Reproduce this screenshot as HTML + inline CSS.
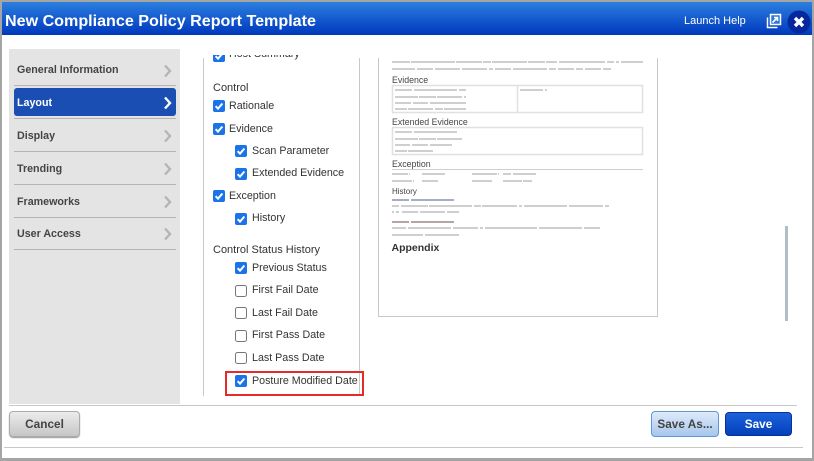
<!DOCTYPE html>
<html><head><meta charset="utf-8">
<style>
html,body{margin:0;padding:0;width:814px;height:461px;overflow:hidden;background:#fff;font-family:"Liberation Sans",Arial,sans-serif}
.a{position:absolute;white-space:nowrap}
#frame{position:absolute;left:0;top:0;width:814px;height:461px;box-sizing:border-box;border-style:solid;border-color:#a5a5a5;border-width:2px 2px 3px 2px;z-index:10;pointer-events:none}
#hd{left:2px;top:2px;width:810px;height:33px;background:linear-gradient(#2c7fde,#0a49c6 75%,#0039bb)}
.nav{left:17px;font-size:10.7px;font-weight:bold;color:#444;line-height:14px}
.div{left:14px;width:162px;height:1px;background:#b4b4b4}
.chev{position:absolute;left:163px;width:9px;height:14px}
.t{font-size:10.7px;color:#333;line-height:14px}
.h{font-size:11px;color:#333;line-height:14px;left:213px}
.cb{position:absolute;width:12px;height:12px}
.btn{position:absolute;box-sizing:border-box;text-align:center;font-size:11.8px;font-weight:bold;border-radius:4px}
</style></head><body>
<svg width="0" height="0" style="position:absolute"><defs>
<symbol id="on" viewBox="0 0 12 12"><rect width="12" height="12" rx="2" fill="#1a73e8"/><path d="M2.6 6.200 5 8.600 9.400 3.500" fill="none" stroke="#fff" stroke-width="2"/></symbol>
<symbol id="off" viewBox="0 0 12 12"><rect x=".5" y=".5" width="11" height="11" rx="2" fill="#fff" stroke="#767676"/></symbol>
<symbol id="ch" viewBox="0 0 9 14"><path d="M2 1.500 7 7 2 12.500" fill="none" stroke="currentColor" stroke-width="2.400"/></symbol>
</defs></svg>

<div id="frame"></div>
<div class="a" id="hd"></div>
<div class="a" style="left:5px;top:11px;font-size:16.1px;font-weight:bold;color:#fff;line-height:20px">New Compliance Policy Report Template</div>
<div class="a" style="left:684px;top:14px;font-size:11px;color:#fff;line-height:14px">Launch Help</div>
<svg class="a" style="left:766px;top:13px" width="16" height="16" viewBox="0 0 16 16"><rect x="4.500" y="1.500" width="10" height="10" fill="#2f78d8" stroke="#fff" stroke-width="1.500"/><path d="M1.500 4.500V14.500H11.500" fill="none" stroke="#fff" stroke-width="1.500"/><path d="M6.500 9.500 11 5M8 4.500h3.500V8" fill="none" stroke="#fff" stroke-width="1.600"/></svg>
<svg class="a" style="left:787px;top:10px" width="24" height="24" viewBox="0 0 24 24"><circle cx="12" cy="12" r="11.500" fill="#07289c"/><path d="M8 8 16 16M16 8 8 16" stroke="#fff" stroke-width="3.400"/></svg>

<div class="a" style="left:9px;top:49px;width:171px;height:355px;background:#e4e4e4"></div>
<div class="a nav" style="top:63px">General Information</div>
<div class="a div" style="top:85px"></div>
<div class="a" style="left:14px;top:88px;width:162px;height:28px;background:#1b4eb2;border-radius:3px"></div>
<div class="a nav" style="top:96px;color:#fff">Layout</div>
<div class="a div" style="top:118px"></div>
<div class="a nav" style="top:129px">Display</div>
<div class="a div" style="top:151px"></div>
<div class="a nav" style="top:162px">Trending</div>
<div class="a div" style="top:184px"></div>
<div class="a nav" style="top:195px">Frameworks</div>
<div class="a div" style="top:217px"></div>
<div class="a nav" style="top:227px">User Access</div>
<div class="a div" style="top:249px"></div>
<svg class="chev" style="top:64px;color:#b5b5b5"><use href="#ch"/></svg>
<svg class="chev" style="top:96px;color:#fff"><use href="#ch"/></svg>
<svg class="chev" style="top:129px;color:#b5b5b5"><use href="#ch"/></svg>
<svg class="chev" style="top:162px;color:#b5b5b5"><use href="#ch"/></svg>
<svg class="chev" style="top:195px;color:#b5b5b5"><use href="#ch"/></svg>
<svg class="chev" style="top:227px;color:#b5b5b5"><use href="#ch"/></svg>

<div class="a" style="left:203px;top:58px;width:1px;height:338px;background:#c8c8c8"></div>
<div class="a" style="left:359px;top:58px;width:1px;height:338px;background:#c8c8c8"></div>

<div class="a" style="left:205px;top:55px;width:150px;height:9px;overflow:hidden">
  <svg class="cb" style="left:8px;top:-5px"><use href="#on"/></svg>
  <div class="a t" style="left:24px;top:-8px">Host Summary</div>
</div>

<div class="a h" style="top:81px">Control</div>
<svg class="cb" style="left:213px;top:100px"><use href="#on"/></svg><div class="a t" style="left:229px;top:99px">Rationale</div>
<svg class="cb" style="left:213px;top:123px"><use href="#on"/></svg><div class="a t" style="left:229px;top:122px">Evidence</div>
<svg class="cb" style="left:235px;top:145px"><use href="#on"/></svg><div class="a t" style="left:252px;top:144px">Scan Parameter</div>
<svg class="cb" style="left:235px;top:168px"><use href="#on"/></svg><div class="a t" style="left:252px;top:166px">Extended Evidence</div>
<svg class="cb" style="left:213px;top:190px"><use href="#on"/></svg><div class="a t" style="left:229px;top:189px">Exception</div>
<svg class="cb" style="left:235px;top:213px"><use href="#on"/></svg><div class="a t" style="left:252px;top:211px">History</div>
<div class="a h" style="top:243px">Control Status History</div>
<svg class="cb" style="left:235px;top:262px"><use href="#on"/></svg><div class="a t" style="left:252px;top:261px">Previous Status</div>
<svg class="cb" style="left:235px;top:285px"><use href="#off"/></svg><div class="a t" style="left:252px;top:283px">First Fail Date</div>
<svg class="cb" style="left:235px;top:307px"><use href="#off"/></svg><div class="a t" style="left:252px;top:306px">Last Fail Date</div>
<svg class="cb" style="left:235px;top:330px"><use href="#off"/></svg><div class="a t" style="left:252px;top:328px">First Pass Date</div>
<svg class="cb" style="left:235px;top:352px"><use href="#off"/></svg><div class="a t" style="left:252px;top:351px">Last Pass Date</div>
<svg class="cb" style="left:235px;top:375px"><use href="#on"/></svg><div class="a t" style="left:252px;top:374px">Posture Modified Date</div>
<div class="a" style="left:225px;top:371px;width:139px;height:25px;box-sizing:border-box;border:2px solid #e62a2a"></div>

<svg class="a" style="left:370px;top:50px" width="300" height="275" viewBox="370 50 300 275">
<path d="M378.500 58V316.500H657.500V58" fill="none" stroke="#c8c8c8"/>
<g fill="#cfcfcf" style="filter:blur(.35px)">
<rect x="392" y="61" width="18" height="2"/><rect x="411" y="61" width="44" height="2"/><rect x="456" y="61" width="26" height="2"/><rect x="483" y="61" width="8" height="2"/><rect x="492" y="61" width="35" height="2"/><rect x="528" y="61" width="17" height="2"/><rect x="546" y="61" width="11" height="2"/><rect x="559" y="61" width="46" height="2"/><rect x="607" y="61" width="7" height="2"/><rect x="616" y="61" width="3" height="2"/><rect x="621" y="61" width="22" height="2"/>
<rect x="392" y="68" width="23" height="2"/><rect x="417" y="68" width="16" height="2"/><rect x="435" y="68" width="25" height="2"/><rect x="462" y="68" width="25" height="2"/><rect x="489" y="68" width="4" height="2"/><rect x="495" y="68" width="16" height="2"/><rect x="513" y="68" width="34" height="2"/><rect x="549" y="68" width="7" height="2"/><rect x="558" y="68" width="16" height="2"/><rect x="576" y="68" width="7" height="2"/><rect x="585" y="68" width="16" height="2"/><rect x="603" y="68" width="8" height="2"/>
<rect x="395" y="89" width="17" height="2"/><rect x="414" y="89" width="43" height="2"/><rect x="459" y="89" width="7" height="2"/><rect x="520" y="89" width="23" height="2"/><rect x="545" y="89" width="2" height="2"/>
<rect x="395" y="96" width="23" height="2"/><rect x="419" y="96" width="17" height="2"/><rect x="437" y="96" width="25" height="2"/><rect x="464" y="96" width="2" height="2"/>
<rect x="395" y="102" width="16" height="2"/><rect x="413" y="102" width="15" height="2"/><rect x="430" y="102" width="36" height="2"/>
<rect x="395" y="108" width="12" height="2"/><rect x="408" y="108" width="25" height="2"/><rect x="435" y="108" width="8" height="2"/><rect x="444" y="108" width="22" height="2"/>
<rect x="395" y="131" width="17" height="2"/><rect x="414" y="131" width="43" height="2"/>
<rect x="395" y="138" width="23" height="2"/><rect x="419" y="138" width="17" height="2"/><rect x="437" y="138" width="25" height="2"/>
<rect x="395" y="144" width="15" height="2"/><rect x="412" y="144" width="16" height="2"/><rect x="430" y="144" width="22" height="2"/>
<rect x="395" y="150" width="12" height="2"/><rect x="408" y="150" width="25" height="2"/>
<rect x="392" y="173" width="16" height="2"/><rect x="409" y="173" width="1" height="2"/><rect x="422" y="173" width="23" height="2"/><rect x="472" y="173" width="25" height="2"/><rect x="498" y="173" width="1" height="2"/><rect x="503" y="173" width="8" height="2"/><rect x="513" y="173" width="23" height="2"/>
<rect x="392" y="180" width="20" height="2"/><rect x="413" y="180" width="1" height="2"/><rect x="422" y="180" width="16" height="2"/><rect x="472" y="180" width="20" height="2"/><rect x="503" y="180" width="19" height="2"/><rect x="523" y="180" width="9" height="2"/>
<rect x="392" y="205" width="7" height="2"/><rect x="401" y="205" width="27" height="2"/><rect x="429" y="205" width="43" height="2"/><rect x="474" y="205" width="7" height="2"/><rect x="482" y="205" width="35" height="2"/><rect x="519" y="205" width="3" height="2"/><rect x="524" y="205" width="43" height="2"/><rect x="569" y="205" width="34" height="2"/><rect x="605" y="205" width="4" height="2"/>
<rect x="392" y="211" width="2" height="2"/><rect x="396" y="211" width="3" height="2"/><rect x="402" y="211" width="16" height="2"/><rect x="420" y="211" width="25" height="2"/><rect x="447" y="211" width="12" height="2"/>
<rect x="392" y="227" width="14" height="2"/><rect x="408" y="227" width="43" height="2"/><rect x="453" y="227" width="25" height="2"/><rect x="480" y="227" width="3" height="2"/><rect x="485" y="227" width="52" height="2"/><rect x="539" y="227" width="43" height="2"/><rect x="584" y="227" width="16" height="2"/>
<rect x="392" y="234" width="31" height="2"/><rect x="425" y="234" width="34" height="2"/>
</g>
<g fill="#a8adc6"><rect x="392" y="199" width="17" height="2"/><rect x="411" y="199" width="43" height="2"/></g>
<g fill="#b5a6a6"><rect x="392" y="221" width="17" height="2"/><rect x="411" y="221" width="43" height="2"/></g>
<g fill="none" stroke="#e0e0e0" stroke-width="1.500">
<rect x="392.500" y="85.500" width="250" height="27"/><path d="M517.500 85V112"/>
<rect x="392.500" y="127.500" width="250" height="27"/>
<path d="M392 169.500H643" stroke="#cfcfcf" stroke-width="1"/>
</g>
<g font-family="Liberation Sans, Arial, sans-serif" fill="#444" font-size="8.800">
<text x="392" y="83">Evidence</text>
<text x="392" y="125">Extended Evidence</text>
<text x="392" y="167">Exception</text>
<text x="392" y="194" font-size="8">History</text>
<text x="391.500" y="251" font-size="10.500" font-weight="bold" fill="#333">Appendix</text>
</g>
</svg>

<div class="a" style="left:785px;top:226px;width:3px;height:95px;background:#b0bec5"></div>

<div class="a" style="left:9px;top:405px;width:788px;height:1px;background:#c8c8c8"></div>
<div class="a" style="left:4px;top:447px;width:799px;height:1px;background:#c8c8c8"></div>

<div class="btn" style="left:9px;top:411px;width:71px;height:26px;line-height:24px;color:#444;border:1px solid #aaa;background:linear-gradient(#ececec,#c6c6c6);box-shadow:0 1px 1px #999">Cancel</div>
<div class="btn" style="left:651px;top:411px;width:68px;height:26px;line-height:24px;color:#444;border:1px solid #5f97d6;background:linear-gradient(#dfeafa,#a6c6ec)">Save As...</div>
<div class="btn" style="left:725px;top:412px;width:67px;height:24px;line-height:22px;color:#fff;border:1px solid #0a2f96;background:linear-gradient(#1c62da,#0440bb)">Save</div>
</body></html>
